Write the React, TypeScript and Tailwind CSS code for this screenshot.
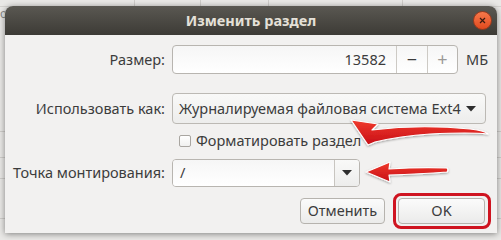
import React from "react";

const F = { fontFamily: '"Noto Sans", "DejaVu Sans", sans-serif' };

function Arrow() {
  return (
    <svg className="absolute left-0 top-0 pointer-events-none" width="501" height="240" viewBox="0 0 501 240">
      <defs>
        <linearGradient id="rg" x1="0" y1="0" x2="0" y2="1">
          <stop offset="0" stopColor="#f03a2c" />
          <stop offset="1" stopColor="#c70f17" />
        </linearGradient>
        <filter id="sh" x="-10%" y="-30%" width="120%" height="160%">
          <feDropShadow dx="0" dy="1" stdDeviation="0.8" floodColor="#000" floodOpacity="0.35" />
        </filter>
      </defs>
      <g filter="url(#sh)" stroke="#ffffff" strokeWidth="1.2" strokeLinejoin="round" fill="url(#rg)">
        <path d="M351 120 L378 124 L372 130 Q 420 124 470 129 Q 486 131 488 134 Q 470 132 430 134 Q 400 136 375 142 L 368 145 Z" />
        <path d="M366 172 L390 162 L389 169 Q 420 167 447 168 Q 449 170 447 172 Q 420 174 389 175 L390 182 Z" />
      </g>
    </svg>
  );
}

export default function App() {
  return (
    <div className="relative w-[501px] h-[240px] overflow-hidden bg-[#e9e8e6]" style={F}>
      {/* background app */}
      <div className="absolute left-0 top-0 w-[501px] h-[240px]">
        <div className="absolute left-0 right-0 top-[6px] h-px bg-[#d4d2cf]" />
        <div className="absolute left-[134px] top-0 h-[6px] w-px bg-[#cfcdca]" />
        <div className="absolute left-[200px] top-0 h-[6px] w-px bg-[#cfcdca]" />
        <div className="absolute left-[268px] top-0 h-[6px] w-px bg-[#cfcdca]" />
        <div className="absolute left-[402px] top-0 h-[6px] w-px bg-[#cfcdca]" />
        <div className="absolute left-0 right-0 top-[131px] h-px bg-[#cfcdca]" />
        <div className="absolute left-0 right-0 top-[157px] h-px bg-[#cfcdca]" />
        <div className="absolute left-0 right-0 top-[178px] h-px bg-[#cfcdca]" />
        <div className="absolute left-0 right-0 top-[218px] h-px bg-[#cfcdca]" />
        <div className="absolute left-0 top-[8px] text-[12px] leading-none text-[#888]">о</div>
      </div>

      {/* dialog window */}
      <div className="absolute left-[5px] top-[6px] w-[492px] h-[227px] flex flex-col rounded-t-[8px] bg-[#f2f1f0] shadow-[0_1px_6px_rgba(0,0,0,0.45)] text-[#3c3c3c]">
        <div className="relative h-[29px] shrink-0 rounded-t-[8px] bg-gradient-to-b from-[#5a5852] to-[#3d3b36] flex items-center justify-center">
          <span className="text-[14.5px] font-bold text-[#e4e0d8]">Изменить раздел</span>
          <div className="absolute right-[5px] top-[5px] w-[19px] h-[19px] rounded-full bg-gradient-to-b from-[#f7784a] to-[#e0491c] border border-[#9a3a1e] flex items-center justify-center">
            <svg width="7" height="7" viewBox="0 0 7 7"><path d="M1 1 L6 6 M6 1 L1 6" stroke="#3a1a10" strokeWidth="1.2" /></svg>
          </div>
        </div>

        <div className="grid grid-cols-[152px_1fr] gap-x-[7px] pl-[8px] pr-[11px] text-[14.5px] whitespace-nowrap">
          {/* row 1 */}
          <div className="mt-[10px] h-[29px] flex items-center justify-end">Размер:</div>
          <div className="mt-[10px] h-[29px] flex items-center">
            <div className="w-[286px] h-[29px] flex rounded-[4px] border border-[#b8b5b0] bg-gradient-to-b from-[#f6f6f6] to-[#ffffff] overflow-hidden">
              <div className="flex-1 flex items-center justify-end pr-[10px]">13582</div>
              <div className="w-[31px] border-l border-[#cdcac5] flex items-center justify-center text-[18px] text-[#3c3c3c]">−</div>
              <div className="w-[30px] border-l border-[#cdcac5] flex items-center justify-center text-[18px] text-[#9a9996]">+</div>
            </div>
            <span className="ml-[8px]">МБ</span>
          </div>

          {/* row 2 */}
          <div className="mt-[19px] h-[31px] flex items-center justify-end">Использовать как:</div>
          <div className="mt-[19px] h-[31px] flex items-center">
            <div className="w-[314px] h-[31px] flex items-center rounded-[4px] border border-[#bcb9b4] bg-gradient-to-b from-[#f9f9f8] to-[#ededec] pl-[6px] pr-[9px]">
              <span className="flex-1">Журналируемая файловая система Ext4</span>
              <svg width="10" height="6" viewBox="0 0 10 6"><path d="M0 0 L10 0 L5 5.5 Z" fill="#2e2e2e" /></svg>
            </div>
          </div>

          {/* checkbox row */}
          <div />
          <div className="mt-[8px] h-[18px] flex items-center pl-[7px]">
            <div className="w-[12px] h-[12px] rounded-[2px] border border-[#a9a6a1] bg-gradient-to-b from-[#ffffff] to-[#f0f0ef]" />
            <span className="ml-[5px]">Форматировать раздел</span>
          </div>

          {/* row 3 */}
          <div className="mt-[9px] h-[28px] flex items-center justify-end">Точка монтирования:</div>
          <div className="mt-[9px] h-[28px] flex items-center">
            <div className="w-[188px] h-[28px] flex rounded-[4px] border border-[#b8b5b0] overflow-hidden">
              <div className="flex-1 bg-gradient-to-b from-[#f6f6f6] to-[#ffffff] flex items-center pl-[7px]">/</div>
              <div className="w-[25px] border-l border-[#c8c5c0] bg-gradient-to-b from-[#f9f9f8] to-[#ededec] flex items-center justify-center">
                <svg width="10" height="6" viewBox="0 0 10 6"><path d="M0 0 L10 0 L5 5.5 Z" fill="#2e2e2e" /></svg>
              </div>
            </div>
          </div>
        </div>

        {/* buttons */}
        <div className="flex justify-end gap-[13px] mt-[11px] pr-[12px] text-[14.5px]">
          <div className="w-[85px] h-[26px] rounded-[4px] border border-[#b6b3ae] bg-gradient-to-b from-[#fbfbfb] to-[#ebebea] flex items-center justify-center">Отменить</div>
          <div className="relative w-[87px] h-[26px] rounded-[4px] border border-[#b6b3ae] bg-gradient-to-b from-[#fbfbfb] to-[#ebebea] flex items-center justify-center">
            OK
            <div className="absolute -left-[6px] -top-[6px] -right-[7px] -bottom-[6px] rounded-[8px] border-[3px] border-[#cf1420]" />
          </div>
        </div>
      </div>

      <Arrow />
    </div>
  );
}
